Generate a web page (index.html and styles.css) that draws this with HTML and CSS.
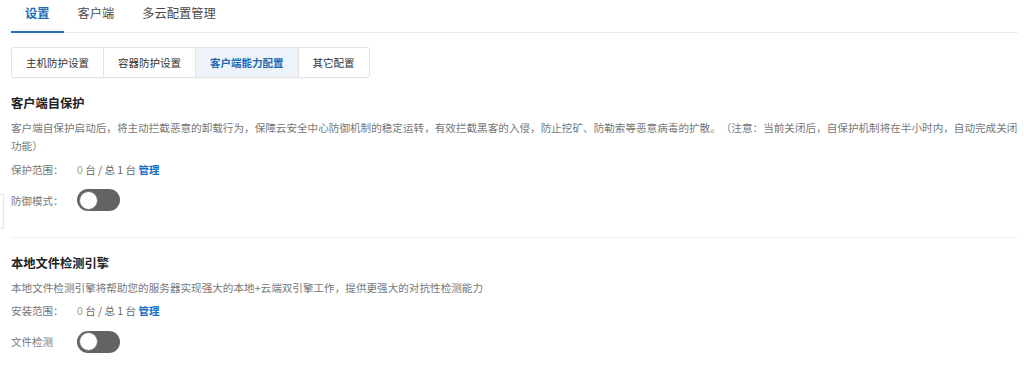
FILE: index.html
```html
<!DOCTYPE html>
<html lang="zh-CN">
<head>
<meta charset="utf-8">
<title>设置</title>
<link rel="stylesheet" href="styles.css">
</head>
<body>
<div class="page">
  <nav class="tabs">
    <div class="tab active">设置</div>
    <div class="tab">客户端</div>
    <div class="tab">多云配置管理</div>
  </nav>
  <div class="subtabs">
    <div class="subtab">主机防护设置</div>
    <div class="subtab">容器防护设置</div>
    <div class="subtab active">客户端能力配置</div>
    <div class="subtab">其它配置</div>
  </div>

  <section class="section">
    <h3 class="title">客户端自保护</h3>
    <p class="desc">客户端自保护启动后，将主动拦截恶意的卸载行为，保障云安全中心防御机制的稳定运转，有效拦截黑客的入侵，防止挖矿、防勒索等恶意病毒的扩散。（注意：当前关闭后，自保护机制将在半小时内，自动完成关闭功能）</p>
    <div class="row">
      <span class="label">保护范围：</span>
      <span class="value"><span class="num">0</span> 台 / 总 1 台 <a class="link">管理</a></span>
    </div>
    <div class="row switch-row">
      <span class="label">防御模式：</span>
      <span class="switch"><span class="knob"></span></span>
    </div>
  </section>

  <div class="divider"></div>

  <section class="section">
    <h3 class="title">本地文件检测引擎</h3>
    <p class="desc">本地文件检测引擎将帮助您的服务器实现强大的本地+云端双引擎工作，提供更强大的对抗性检测能力</p>
    <div class="row">
      <span class="label">安装范围：</span>
      <span class="value"><span class="num">0</span> 台 / 总 1 台 <a class="link">管理</a></span>
    </div>
    <div class="row switch-row">
      <span class="label">文件检测</span>
      <span class="switch"><span class="knob"></span></span>
    </div>
  </section>

  <div class="edge-panel"></div>
</div>
</body>
</html>
```

FILE: styles.css
```css
* { box-sizing: border-box; }
html, body {
  margin: 0;
  padding: 0;
  background: #fff;
}
body {
  font-family: "Noto Sans CJK SC", "Noto Sans", "Liberation Sans", sans-serif;
  color: #333;
  font-size: 10.5px;
  text-spacing-trim: space-all;
}
.page {
  position: relative;
  padding: 0 6px 0 11px;
  width: 1024px;
  height: 368px;
  overflow: hidden;
}
.tabs {
  display: flex;
  border-bottom: 1px solid #ebebeb;
  height: 33px;
}
.tab {
  padding: 5px 14px 0;
  font-size: 12.25px;
  line-height: 17px;
  color: #4a4a4a;
  height: 33px;
  margin-bottom: -1px;
}
.tab.active {
  color: #1f6cb5;
  font-weight: 700;
  border-bottom: 2px solid #2a70b8;
}
.subtabs {
  display: inline-flex;
  margin-top: 14px;
  border: 1px solid #e2e2e2;
  border-radius: 3px;
  height: 31px;
  box-shadow: 0 1px 1px rgba(0,0,0,0.03);
}
.subtab {
  padding: 0 14px;
  line-height: 29px;
  color: #333;
  border-left: 1px solid #e2e2e2;
}
.subtab:first-child { border-left: none; }
.subtab.active {
  background: #eef3f9;
  color: #1f6cb5;
  font-weight: 700;
}
.section {
  margin-top: 16px;
}
.title {
  margin: 0;
  font-size: 12.25px;
  line-height: 18px;
  font-weight: 700;
  color: #222;
}
.desc {
  margin: 6.5px 0 0;
  font-size: 10.6px;
  line-height: 18.5px;
  color: #777;
}
.row {
  display: flex;
  align-items: center;
  margin-top: 4px;
  line-height: 19px;
}
.label {
  width: 66px;
  color: #777;
}
.value { color: #666; }
.num { color: #9aae66; }
.link {
  color: #1d6cbf;
  font-weight: 700;
}
.switch-row {
  margin-top: 10.5px;
  height: 22px;
}
.switch {
  display: inline-flex;
  align-items: center;
  width: 43px;
  height: 22px;
  border-radius: 11px;
  background: #636363;
  padding: 1px 2px;
}
.knob {
  width: 19px;
  height: 19px;
  border-radius: 50%;
  background: #fff;
  border: 1.5px solid #7a7a7a;
}
.divider {
  margin-top: 26px;
  border-top: 1px solid #f0f0f0;
}
.edge-panel {
  position: absolute;
  left: -40px;
  top: 194px;
  width: 44px;
  height: 34px;
  border: 1px solid #e4e4e4;
  background: #fff;
  box-shadow: 0 1px 3px rgba(0,0,0,0.06);
}
```
